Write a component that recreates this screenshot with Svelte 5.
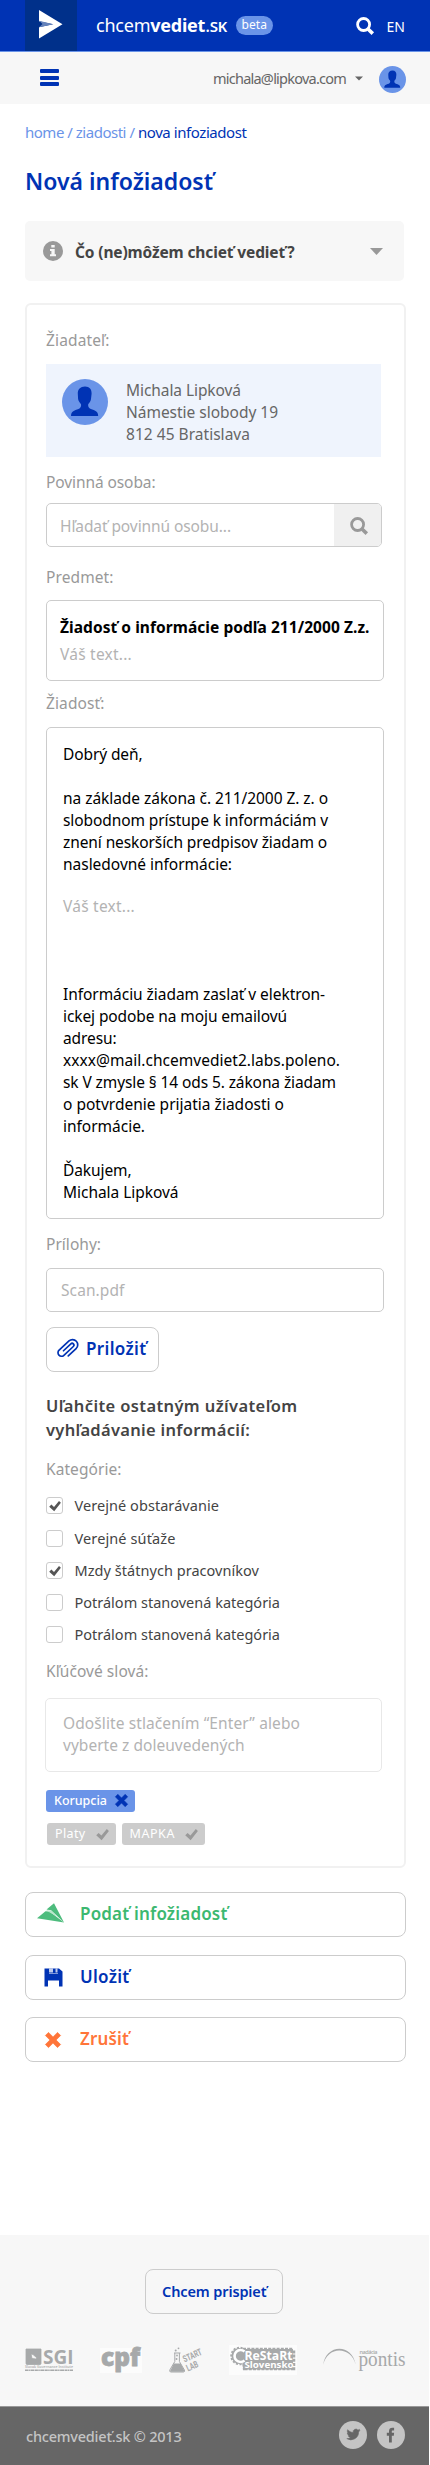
<script>
  // Tracks a line of text so that it fills the given measure in pixels.
  function fit(node, width) {
    const natural = node.getBoundingClientRect().width;
    const count = [...node.textContent].length;
    node.style.letterSpacing = `${((width - natural) / count).toFixed(4)}px`;
  }

  const address = [
    ['Michala Lipková', 115],
    ['Námestie slobody 19', 152],
    ['812 45 Bratislava', 124]
  ];

  const opening = [
    ['Dobrý deň,', 79.5],
    null,
    ['na základe zákona č. 211/2000 Z. z. o', 265],
    ['slobodnom prístupe k informáciám v', 265],
    ['znení neskorších predpisov žiadam o', 264],
    ['nasledovné informácie:', 169]
  ];

  const closing = [
    ['Informáciu žiadam zaslať v elektron-', 262],
    ['ickej podobe na moju emailovú', 224],
    ['adresu:', 53.5],
    ['xxxx@mail.chcemvediet2.labs.poleno.', 277],
    ['sk V zmysle § 14 ods 5. zákona žiadam', 273],
    ['o potvrdenie prijatia žiadosti o', 221],
    ['informácie.', 82],
    null,
    ['Ďakujem,', 68.5],
    ['Michala Lipková', 115.5]
  ];

  const categories = [
    { name: 'Verejné obstarávanie', width: 144.5, checked: true },
    { name: 'Verejné súťaže', width: 101, checked: false },
    { name: 'Mzdy štátnych pracovníkov', width: 184.5, checked: true },
    { name: 'Potrálom stanovená kategória', width: 205.5, checked: false },
    { name: 'Potrálom stanovená kategória', width: 205.5, checked: false }
  ];
</script>

{#snippet avatar(size)}
  <svg class="avatar" width={size} height={size} viewBox="0 0 46 46">
    <circle cx="23" cy="23" r="23" fill="#6a94e8" />
    <path
      d="M23 7.5c-4.600 0-7.400 3-7.200 7.200l.3 5.300c.3 2.200 1.700 3.500 2.800 5.100.5 1.400.1 3.100-1.100 4.200-3.300 2.200-8.800 1.600-8.800 7.700h27.200c0-6.100-5.300-5.500-8.700-7.700-1.300-1.100-1.600-2.800-1.200-4.200 1.200-1.600 2.500-2.900 2.700-5.100l.6-5.300c.2-4.200-2-7.200-6.600-7.200z"
      fill="#0033b4"
    />
  </svg>
{/snippet}

{#snippet lens(size)}
  <svg width={size} height={size} viewBox="0 0 18 18" fill="none" stroke="currentColor">
    <circle cx="7.600" cy="7.500" r="6" stroke-width="2.800" />
    <path d="M12 12l4.800 4.600" stroke-width="3.600" />
  </svg>
{/snippet}

{#snippet tick(size)}
  <svg width={size} height={size} viewBox="0 0 12 12">
    <path d="M.2 6.700l2.200-2.100L5 6.900 10 .9l1.900 1.900-6.700 8.500z" fill="currentColor" />
  </svg>
{/snippet}

{#snippet cross(size)}
  <svg width={size} height={size} viewBox="0 0 16 16">
    <path
      d="M3.500.4L8 4.900 12.500.4l3.100 3.100L11.100 8l4.500 4.500-3.100 3.100L8 11.100l-4.500 4.500-3.100-3.100L4.900 8 .4 3.500z"
      fill="currentColor"
      stroke="currentColor"
      stroke-width=".7"
      stroke-linejoin="round"
    />
  </svg>
{/snippet}

{#snippet lines(rows)}
  {#each rows as row}
    <div class="line">{#if row}<span use:fit={row[1]}>{row[0]}</span>{/if}</div>
  {/each}
{/snippet}

<div class="page">
  <header class="masthead">
    <div class="logo">
      <svg width="24" height="29" viewBox="0 0 24 29">
        <path d="M0 0l23.500 14.300L0 28.500V17.300l14-3L0 11.200z" fill="#fff" />
        <path d="M0 10.800l14.500 3.500L0 17.200l3.500-3.100z" fill="#6583bb" />
      </svg>
    </div>
    <div class="brand"><span use:fit={131}>chcem<b>vediet</b>.<span class="caps">sk</span></span></div>
    <span class="beta"><span use:fit={25.5}>beta</span></span>
    <div class="tools">
      {@render lens(18)}
      <span use:fit={18.5}>EN</span>
    </div>
  </header>

  <nav class="userbar">
    <div class="menu"><i></i><i></i><i></i></div>
    <div class="email"><span use:fit={133}>michala@lipkova.com</span></div>
    <svg class="caret" width="8" height="5" viewBox="0 0 8 5"><path d="M0 .5h8L4 4.500z" fill="#666" /></svg>
    {@render avatar(27)}
  </nav>

  <main>
    <div class="crumbs">
      <span class="soft"><span use:fit={109.5}>home / ziadosti /</span></span>
      <span class="here"><span use:fit={108.5}>nova infoziadost</span></span>
    </div>
    <h1><span use:fit={188}>Nová infožiadosť</span></h1>

    <section class="hint">
      <svg width="20" height="20" viewBox="0 0 20 20">
        <circle cx="10" cy="10" r="10" fill="#999" />
        <path d="M8.300 3.900h3.400v2.600H8.300zM7 8h4.700v5.300H13v1.900H7v-1.900h1.400V9.900H7z" fill="#f7f7f7" />
      </svg>
      <strong><span use:fit={219.5}>Čo (ne)môžem chcieť vedieť?</span></strong>
      <svg width="13" height="7" viewBox="0 0 13 7"><path d="M0 0h13L6.500 7z" fill="#999" /></svg>
    </section>

    <form class="card">
      <div class="label first"><span use:fit={63.5}>Žiadateľ:</span></div>
      <div class="applicant">
        {@render avatar(46)}
        <div>{@render lines(address)}</div>
      </div>

      <div class="label body-label"><span use:fit={109.5}>Povinná osoba:</span></div>
      <div class="field search">
        <div class="value"><span use:fit={171}>Hľadať povinnú osobu...</span></div>
        <div class="go">{@render lens(18)}</div>
      </div>

      <div class="label subject-label"><span use:fit={67.5}>Predmet:</span></div>
      <div class="field subject">
        <div class="line strong"><span use:fit={309.5}>Žiadosť o informácie podľa 211/2000 Z.z.</span></div>
        <div class="line faint"><span use:fit={72}>Váš text...</span></div>
      </div>

      <div class="label request-label"><span use:fit={58.5}>Žiadosť:</span></div>
      <div class="field letter">
        {@render lines(opening)}
        <div class="line faint prompt"><span use:fit={72}>Váš text...</span></div>
        {@render lines(closing)}
      </div>

      <div class="label files-label"><span use:fit={55}>Prílohy:</span></div>
      <div class="field file"><span use:fit={63.5}>Scan.pdf</span></div>
      <div class="button attach">
        <svg width="22" height="20" viewBox="-11 -10 22 20" fill="none" stroke="currentColor" stroke-width="1.700" stroke-linecap="round">
          <path transform="rotate(-43)" d="M-4.500 5.200H6.200A5.200 5.200 0 0 0 6.200-5.200H-7.300A3.500 3.500 0 0 0-7.300 1.800H5.600A1.800 1.800 0 0 0 5.600-1.800H-4.500" />
        </svg>
        <span use:fit={60.5}>Priložiť</span>
      </div>

      <h2>
        <span use:fit={251.5}>Uľahčite ostatným užívateľom</span><br />
        <span use:fit={204}>vyhľadávanie informácií:</span>
      </h2>

      <div class="label cat-label"><span use:fit={75.5}>Kategórie:</span></div>
      <ul class="checks">
        {#each categories as category}
          <li>
            <span class="box">{#if category.checked}{@render tick(12)}{/if}</span>
            <span use:fit={category.width}>{category.name}</span>
          </li>
        {/each}
      </ul>

      <div class="label key-label"><span use:fit={102.5}>Kľúčové slová:</span></div>
      <div class="field keywords">
        <div class="line faint"><span use:fit={237}>Odošlite stlačením “Enter” alebo</span></div>
        <div class="line faint"><span use:fit={181.5}>vyberte z doleuvedených</span></div>
      </div>

      <div class="tags">
        <div class="tag active"><span use:fit={53}>Korupcia</span>{@render cross(13)}</div>
      </div>
      <div class="tags rest">
        <div class="tag"><span use:fit={30.5}>Platy</span>{@render tick(13)}</div>
        <div class="tag"><span use:fit={45.5}>MAPKA</span>{@render tick(13)}</div>
      </div>
    </form>

    <div class="actions">
      <div class="button send">
        <svg width="28" height="20" viewBox="0 0 28 20">
          <path d="M0 15.200L8.500 8.300l4 .3L27 19.500z" fill="#4dbc7d" />
          <path d="M9.500 6.500L17 .2l10 19.300-13-12.300z" fill="#4dbc7d" />
          <path d="M8.800 7.300l5.500.3 6.700 6.300L11.500 8.700z" fill="#b9e6cb" />
        </svg>
        <span use:fit={147.5}>Podať infožiadosť</span>
      </div>
      <div class="button save">
        <svg width="19" height="19" viewBox="0 0 19 19">
          <path d="M.5.5H5v5h9v-5h1l3.500 3v15H15v-6H4v6H.5z" fill="currentColor" />
          <path d="M5 .5h9V5H5z" fill="currentColor" />
          <path d="M5 .5h4v4H5zM11.500.5h2v4h-2z" fill="#fff" opacity=".75" />
        </svg>
        <span use:fit={49.5}>Uložiť</span>
      </div>
      <div class="button cancel">
        {@render cross(16)}
        <span use:fit={49}>Zrušiť</span>
      </div>
    </div>
  </main>

  <footer>
    <div class="support">
      <div class="button give"><span use:fit={104.5}>Chcem prispieť</span></div>
      <div class="partners">
        <svg width="49" height="24" viewBox="0 0 49 24" fill="#a7a9aa">
          <path d="M1 1h15v14.500q0 1-1 1H2q-1.500 0-1-2.500zM6 6l2 .5 4 3.500-1 1-4-.5z" fill-rule="evenodd" stroke="#a7a9aa" stroke-width=".8" />
          <text x="18" y="16" font-size="19" font-weight="700" textLength="30.500" lengthAdjust="spacingAndGlyphs">SGI</text>
          <text x="0" y="20.300" font-size="4.300" font-weight="600" textLength="48" lengthAdjust="spacingAndGlyphs">Slovak Governance Institute</text>
          <path d="M0 22.300h48" stroke="#a7a9aa" stroke-width="1.600" stroke-dasharray="3 .4 1.500 .5 4 .5" />
        </svg>
        <svg width="42" height="25" viewBox="0 0 42 25">
          <path d="M0 0h42v25H0z" fill="#fcfcfc" />
          <text x="1" y="18" font-size="24" font-weight="800" fill="#a7a9aa" stroke="#a7a9aa" stroke-width=".8" textLength="39" lengthAdjust="spacingAndGlyphs">cpf</text>
        </svg>
        <svg width="34" height="26" viewBox="0 0 34 26" fill="#a7a9aa">
          <path d="M5 6h6.500M5.800 6v8.500L.8 23q-.6 2 1.200 2h12.500q1.600 0 .9-2l-5-8.500V6" fill="none" stroke="#a7a9aa" stroke-width="1" />
          <path d="M4.800 16.500h6.800l3.600 6.700q.3 1.500-1 1.500H2.300q-1.500 0-.8-1.500z" />
          <circle cx="6.700" cy="3.500" r="1" /><circle cx="9.500" cy="1.300" r=".9" /><circle cx="8" cy="8.500" r=".9" /><circle cx="7.500" cy="12" r="1" />
          <g class="condensed" font-weight="700">
            <text transform="translate(15.500 15.500) rotate(-24)" font-size="9.500" textLength="20" lengthAdjust="spacingAndGlyphs">START</text>
            <text transform="translate(19 24.500) rotate(-24)" font-size="9.500" textLength="12" lengthAdjust="spacingAndGlyphs">LAB</text>
          </g>
        </svg>
        <svg width="68" height="30" viewBox="0 0 68 30">
          <path d="M0 0h68v30H0z" fill="#fcfcfc" />
          <path d="M14 5h50v18H16z" fill="#a7a9aa" stroke="#a7a9aa" stroke-width="4.500" stroke-dasharray="3 1.200" />
          <path d="M14 4h50v20.500H14z" fill="#a7a9aa" />
          <circle cx="10.500" cy="11" r="8" fill="#a7a9aa" stroke="#a7a9aa" stroke-width="2.500" stroke-dasharray="2 1.500" />
          <path d="M15.500 6.500a6 6 0 1 0 0 9" fill="none" stroke="#fff" stroke-width="2.600" />
          <g fill="#fff" font-weight="700">
            <text x="15.500" y="14.500" font-size="12" textLength="48" lengthAdjust="spacingAndGlyphs">ReStaRt</text>
            <text x="15.500" y="23.300" font-size="9.500" textLength="49" lengthAdjust="spacingAndGlyphs">Slovensko</text>
          </g>
        </svg>
        <svg width="83" height="24" viewBox="0 0 83 24" fill="#a7a9aa">
          <path d="M.3 17C2-3.500 29-6 32.800 17 28-2.500 4-2 .3 17z" />
          <text x="36.500" y="5.500" font-size="5.500" font-weight="600" textLength="18">nadácia</text>
          <text class="serif" x="35.500" y="17.500" font-size="21" textLength="47" lengthAdjust="spacingAndGlyphs">pontis</text>
        </svg>
      </div>
    </div>
    <div class="legal">
      <span class="copy"><span use:fit={155.5}>chcemvedieť.sk © 2013</span></span>
      <svg width="28" height="28" viewBox="0 0 28 28">
        <circle cx="14" cy="14" r="14" fill="#c4c4c4" />
        <path transform="translate(7.600 7.700) scale(.57)" d="M23.400 3c-.9.400-1.800.7-2.700.8 1-.6 1.700-1.500 2-2.600-.9.500-1.900.9-3 1.100A4.700 4.700 0 0 0 11.600 6.600C7.700 6.400 4.200 4.500 1.900 1.700c-1.200 2.100-.6 4.900 1.500 6.300-.8 0-1.500-.2-2.100-.6 0 2.300 1.600 4.200 3.800 4.700-.7.200-1.400.2-2.100.1.600 1.900 2.300 3.200 4.400 3.300A9.500 9.500 0 0 1 .4 17.400 13.400 13.400 0 0 0 21 5.500c1-.7 1.800-1.500 2.400-2.500z" fill="#666" stroke="#666" />
      </svg>
      <svg width="28" height="28" viewBox="0 0 28 28">
        <circle cx="14" cy="14" r="14" fill="#c4c4c4" />
        <path d="M12 21.500V14.800H9.800V11.800H12V10.200C12 7.700 13.300 6.700 15.300 6.700h1.800v2.800h-1.300c-.8 0-1 .3-1 1v1.300h2.300l-.3 3h-2v6.700z" fill="#666" />
      </svg>
    </div>
  </footer>
</div>

<style>
  :global(body) {
    background: #fff;
  }
  .page {
    width: 430px;
    height: 2465px;
    display: flex;
    flex-direction: column;
    overflow: hidden;
    font: 15.5px/22px 'Noto Sans', 'Open Sans', sans-serif;
    color: #666;
    white-space: nowrap;
  }
  .page *,
  .page {
    box-sizing: border-box;
  }
  svg {
    display: block;
    flex: none;
    overflow: visible;
  }
  .masthead {
    display: flex;
    height: 52px;
    flex: none;
    padding-left: 25px;
    background: #0033b4;
    border-bottom: 1px solid #6a94e8;
    color: #fff;
  }
  .logo {
    width: 52px;
    padding: 10px 0 0 14px;
    background: #00308a;
  }
  .brand {
    width: 139.5px;
    margin-left: 19px;
    padding-top: 14px;
    font-size: 18px;
  }
  .caps {
    font-variant-caps: all-small-caps;
    font-weight: 500;
  }
  .beta {
    width: 37px;
    height: 19px;
    margin-top: 16px;
    padding-left: 6px;
    border-radius: 10px;
    background: #6a94e8;
    font-size: 12px;
    line-height: 18px;
  }
  .tools {
    display: flex;
    gap: 12.5px;
    margin-left: 83.5px;
    padding-top: 17px;
    font-size: 14px;
    line-height: 19px;
  }
  .userbar {
    display: flex;
    flex: none;
    height: 52px;
    padding-left: 40px;
    background: #f7f7f7;
  }
  .menu {
    display: flex;
    flex-direction: column;
    gap: 2.5px;
    width: 19px;
    padding-top: 17px;
  }
  .menu i {
    height: 4px;
    border-radius: 1px;
    background: #0033b4;
  }
  .email {
    width: 142px;
    margin-left: 154px;
    padding-top: 15px;
    font-size: 14.5px;
  }
  .caret {
    margin: 24px 16px 0 0;
  }
  .userbar .avatar {
    margin-top: 14px;
  }
  main {
    display: flex;
    flex-direction: column;
    flex: 1;
    padding: 0 24px 0 25px;
  }
  .crumbs {
    display: flex;
    height: 22px;
    margin-top: 17px;
    font-size: 15px;
    color: #0033b4;
  }
  .soft {
    width: 113px;
    color: #6a94e8;
  }
  h1 {
    height: 32px;
    margin: 22px 0 0;
    color: #0033b4;
    font-size: 23px;
    font-weight: 600;
    line-height: 32px;
  }
  .hint {
    display: flex;
    align-items: center;
    height: 60px;
    margin: 24px 2px 0 0;
    padding: 0 21px 0 18px;
    border-radius: 5px;
    background: #f7f7f7;
    color: #444;
  }
  .hint strong {
    flex: 1;
    margin-left: 12px;
    padding-top: 2px;
  }
  .card {
    margin-top: 22px;
    padding: 24px 19px 21px;
    border: 2px solid #f1f1f1;
    border-radius: 6px;
  }
  .label {
    height: 22px;
    color: #999;
  }
  .applicant {
    display: flex;
    gap: 18px;
    width: 335px;
    height: 93px;
    margin-top: 13px;
    padding: 15px 0 0 16px;
    background: #eff4fd;
  }
  .line {
    height: 22px;
  }
  .body-label {
    margin-top: 14px;
  }
  .subject-label {
    margin-top: 19px;
  }
  .request-label {
    margin-top: 11px;
  }
  .files-label {
    margin-top: 14px;
  }
  .cat-label {
    margin-top: 16px;
  }
  .key-label {
    margin-top: 17px;
  }
  .field {
    width: 338px;
    border: 1px solid #ccc;
    border-radius: 5px;
    color: #000;
  }
  .faint,
  .value,
  .file {
    color: #b3b3b3;
  }
  .search {
    display: flex;
    width: 336px;
    height: 44px;
    margin-top: 10px;
    overflow: hidden;
  }
  .value {
    width: 287px;
    padding: 11px 0 0 13px;
  }
  .go {
    flex: 1;
    padding: 13px 0 0 16px;
    background: #f0f0f0;
    color: #999;
  }
  .subject {
    height: 81px;
    margin-top: 12px;
    padding: 15px 0 0 13px;
  }
  .strong {
    height: 27px;
    font-weight: 700;
  }
  .letter {
    height: 492px;
    margin-top: 13px;
    padding: 15px 0 0 16px;
  }
  .prompt {
    height: 88px;
    margin-top: 20px;
  }
  .file {
    height: 44px;
    margin-top: 13px;
    padding: 10px 0 0 14px;
  }
  .button {
    display: flex;
    height: 45px;
    border: 1.5px solid #ccc;
    border-radius: 8px;
    font-size: 17px;
    font-weight: 600;
    line-height: 42px;
  }
  .attach {
    gap: 7px;
    width: 113px;
    margin-top: 15px;
    padding-left: 10px;
    color: #0033b4;
  }
  .attach svg {
    margin-top: 11px;
  }
  h2 {
    margin: 22px 0 0;
    color: #444;
    font-size: 16.5px;
    font-weight: 600;
    line-height: 24px;
  }
  .checks {
    display: flex;
    flex-direction: column;
    gap: 15px;
    margin: 17px 0 0;
    padding: 0;
    color: #444;
    font-size: 14.5px;
    line-height: 17px;
    list-style: none;
  }
  .checks li {
    display: flex;
    gap: 11.5px;
    height: 17px;
  }
  .checks li:first-child {
    margin-bottom: 1px;
  }
  .box {
    width: 17px;
    height: 17px;
    padding: 2px 0 0 1.5px;
    border: 1px solid #ccc;
    border-radius: 3px;
    color: #555;
  }
  .keywords {
    width: 337px;
    height: 74px;
    margin: 16px 0 0 -1px;
    padding: 13px 0 0 17px;
    border-color: #e8e8e8;
  }
  .tags {
    display: flex;
    gap: 6px;
    margin-top: 18px;
  }
  .rest {
    margin: 11px 0 0 1px;
  }
  .tag {
    display: flex;
    gap: 10px;
    height: 22px;
    padding: 0 7px 0 8px;
    border-radius: 3px;
    background: #ccc;
    color: #fff;
    font-size: 12.5px;
    line-height: 21px;
  }
  .tag svg {
    margin-top: 5px;
    color: #999;
  }
  .active {
    gap: 8px;
    background: #6a94e8;
    font-weight: 500;
  }
  .active svg {
    margin-top: 4px;
    color: #0033b4;
  }
  .actions {
    display: flex;
    flex-direction: column;
    gap: 17.5px;
    margin-top: 24px;
  }
  .send {
    gap: 15px;
    padding-left: 11px;
    color: #3cb870;
  }
  .send svg {
    margin-top: 10px;
  }
  .save {
    gap: 17px;
    padding-left: 18px;
    color: #0033b4;
  }
  .save svg {
    margin-top: 12px;
  }
  .cancel {
    gap: 19px;
    padding-left: 19px;
    color: #ff7539;
  }
  .cancel svg {
    margin-top: 14px;
  }
  footer {
    width: 429px;
    flex: none;
  }
  .support {
    height: 171px;
    padding-top: 34px;
    background: #f7f7f7;
  }
  .give {
    width: 138px;
    margin-left: 145px;
    padding-left: 16px;
    color: #0033b4;
    font-size: 14.5px;
  }
  .partners {
    display: flex;
    align-items: center;
    justify-content: space-between;
    margin-top: 31px;
    padding: 0 23px 0 25px;
  }
  .partners svg {
    font-family: 'Open Sans', sans-serif;
  }
  .partners .condensed {
    font-family: Roboto, sans-serif;
  }
  .partners .serif {
    font-family: 'Liberation Serif', serif;
  }
  .legal {
    display: flex;
    gap: 10px;
    height: 59px;
    padding: 14px 24px 0 26px;
    border-top: 1px solid #999;
    background: #666;
    color: #c4c4c4;
    font-size: 14.5px;
    font-weight: 500;
    line-height: 30px;
  }
  .copy {
    flex: 1;
  }
</style>
